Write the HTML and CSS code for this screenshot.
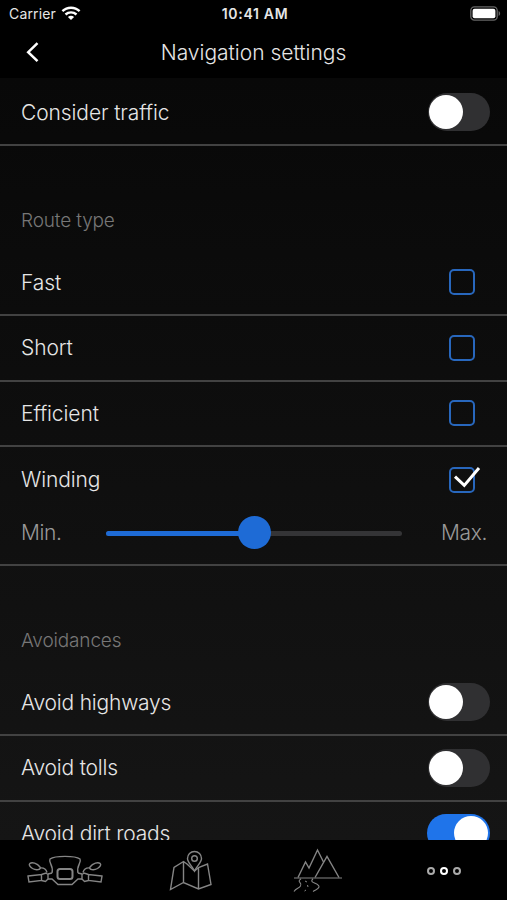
FILE: index.html
```html
<!DOCTYPE html>
<html lang="en">
<head>
  <meta charset="UTF-8" />
  <meta name="viewport" content="width=device-width, initial-scale=1.0"/>
  <title>Navigation settings</title>
  <link rel="stylesheet" href="styles.css">
</head>
<body>
  <div class="app">
    <div class="status-bar">
      <div class="carrier">
        <span>Carrier</span>
        <svg class="wifi" width="20" height="15" viewBox="0 0 20 15">
          <path d="M1.4 5.2 C6.2 .6 13.8 .6 18.6 5.2" />
          <path d="M4.5 8.5 C7.6 5.6 12.4 5.6 15.5 8.5" />
          <path class="dot" d="M10 14 L6.9 10.9 C8.6 9.3 11.4 9.3 13.1 10.9 Z" />
        </svg>
      </div>
      <span class="time">10:41 AM</span>
      <svg class="battery" width="31" height="15" viewBox="0 0 31 15">
        <rect class="shell" x=".8" y=".9" width="26.4" height="13.2" rx="3.6" />
        <rect class="charge" x="2.6" y="2.8" width="22.8" height="9.4" rx="2" />
        <path class="tip" d="M28.6 5 C30.6 5.9 30.6 9.1 28.6 10 Z" />
      </svg>
    </div>

    <div class="nav-bar">
      <svg class="back" width="14" height="22" viewBox="0 0 14 22">
        <path d="M12.5 1.2 L3.2 10.2 L12.5 19.2" />
      </svg>
      <h1>Navigation settings</h1>
    </div>

    <div class="content">
      <div class="row first">
        <span class="label">Consider traffic</span>
        <span class="toggle"></span>
      </div>

      <h2>Route type</h2>
      <div class="row">
        <span class="label">Fast</span>
        <span class="checkbox"></span>
      </div>
      <div class="row">
        <span class="label">Short</span>
        <span class="checkbox"></span>
      </div>
      <div class="row">
        <span class="label">Efficient</span>
        <span class="checkbox"></span>
      </div>
      <div class="row open">
        <span class="label">Winding</span>
        <span class="checkbox">
          <svg class="check" width="30" height="24" viewBox="0 0 30 24">
            <path d="M3 11.6 L12.3 20.4 L27 3" />
          </svg>
        </span>
      </div>
      <div class="slider-row">
        <span class="min">Min.</span>
        <div class="slider">
          <div class="fill"></div>
          <div class="thumb"></div>
        </div>
        <span class="max">Max.</span>
      </div>

      <h2>Avoidances</h2>
      <div class="row avoid">
        <span class="label">Avoid highways</span>
        <span class="toggle"></span>
      </div>
      <div class="row avoid">
        <span class="label">Avoid tolls</span>
        <span class="toggle"></span>
      </div>
      <div class="row avoid">
        <span class="label">Avoid dirt roads</span>
        <span class="toggle on"></span>
      </div>
    </div>

    <div class="tab-bar">
      <!-- handlebar -->
      <svg width="78" height="34" viewBox="0 0 78 34">
        <path d="M26 19 C28 11 22 9 24 5 C29 1.5 49 1.5 54 5 C56 9 50 11 52 19" />
        <path d="M22 20 L26 19 M52 19 L56 20 M22 25 L26 25 L32 30.5 H46 L52 25 L56 25" />
        <rect class="thick" x="31.5" y="15" width="15" height="10" rx="2.5" />
        <path d="M4 9.3 C6 8 11 9 14 13 C15.5 16 10 16.5 6.5 14.5 C3.5 12.5 2.5 10.5 4 9.3 Z" />
        <path d="M74 9.3 C72 8 67 9 64 13 C62.5 16 68 16.5 71.5 14.5 C74.5 12.5 75.5 10.5 74 9.3 Z" />
        <path d="M14 14 C18 13.5 20 15 21 18.5 M64 14 C60 13.5 58 15 57 18.5" />
        <path d="M2 22 L15.5 20.5 V26.5 L3 28 Z M15.5 20.5 L20 19 L22 20.5 V25 L19.5 27.5 L15.5 26.5" />
        <path d="M76 22 L62.5 20.5 V26.5 L75 28 Z M62.5 20.5 L58 19 L56 20.5 V25 L58.5 27.5 L62.5 26.5" />
      </svg>
      <!-- map -->
      <svg width="44" height="42" viewBox="0 0 44 42">
        <path d="M18 14 L14.5 11.5 L5 17.5 L1.5 39.5 L14.5 32.5 L29.5 39 L42 34.5 L38.5 14 L29.5 17.5 L25.5 21 L18 14 M14.5 11.5 V32.5 M29.5 18 V39" />
        <path d="M25.5 21 C23 15.5 18.5 12.5 18.5 8.5 C18.5 4.5 21.5 1.5 25.5 1.5 C29.5 1.5 32.5 4.5 32.5 8.5 C32.5 12.5 28 15.5 25.5 21 Z" />
        <circle cx="25.5" cy="8.5" r="2.8" />
      </svg>
      <!-- mountains -->
      <svg width="50" height="46" viewBox="0 0 50 46">
        <path d="M5 29.5 L12.5 14 L16 20 L24.5 2 L30.5 14" />
        <path d="M22 29.5 L34 8.5 L46 29.5" />
        <path class="thin" d="M1 30 H49 M8 31 C3 34 10 34.5 7.5 38 C6 40.5 3 40 1 43.5 M20 31 C15 35 27 35 26 39 C25.5 41 23 41.5 20 43.5" />
        <path class="dash" d="M12 33 L14 34 M14.5 37 L15 39 M13 42 L11.5 43" />
      </svg>
      <div class="more">
        <i></i><i class="current"></i><i></i>
      </div>
    </div>
  </div>
</body>
</html>
```
FILE: styles.css
```css
* {
  margin: 0;
  padding: 0;
  box-sizing: border-box;
}

body {
  background: #000;
  color: #e6e6e6;
  font-family: Inter, sans-serif;
  font-size: 21px;
  font-weight: 300;
  letter-spacing: -0.1px;
  overflow: hidden;
}

svg {
  display: block;
  fill: none;
}

.app {
  height: 900px;
  display: flex;
  flex-direction: column;
}

.status-bar {
  height: 27px;
  display: grid;
  grid-template-columns: 1fr auto 1fr;
  align-items: center;
  padding: 0 6px 0 9px;
  font-size: 14px;
  font-weight: 400;
  letter-spacing: 0.15px;
}

.carrier {
  display: flex;
  align-items: center;
  gap: 5px;
}

.wifi {
  stroke: #fff;
  stroke-width: 2.4;
}

.wifi .dot {
  fill: #fff;
  stroke: none;
}

.time {
  font-weight: 600;
  letter-spacing: 0.7px;
}

.battery {
  justify-self: end;
}

.shell {
  stroke: #666;
  stroke-width: 1.3;
}

.charge {
  fill: #fff;
}

.tip {
  fill: #666;
}

.nav-bar {
  height: 51px;
  display: grid;
  grid-template-columns: 60px 1fr 60px;
  align-items: center;
}

.back {
  margin-left: 25px;
  stroke: #fff;
  stroke-width: 2.5;
}

h1 {
  font-size: 21px;
  font-weight: 300;
  letter-spacing: 0;
  text-align: center;
}

.content {
  flex: 1;
  min-height: 0;
  overflow: hidden;
  background: linear-gradient(#080808, #151515);
}

.row {
  height: 65.5px;
  display: flex;
  align-items: center;
  justify-content: space-between;
  padding: 0 17px 0 21px;
  border-bottom: 2px solid #424242;
}

.first {
  height: 68px;
  padding-top: 2px;
}

.open {
  height: 65px;
  border-bottom: none;
}

.avoid {
  letter-spacing: -0.2px;
}

h2 {
  height: 104.5px;
  padding: 61.5px 21px 0;
  color: #777;
  font-size: 19px;
  font-weight: 300;
  letter-spacing: -0.15px;
  line-height: 26px;
}

.toggle {
  width: 62px;
  height: 38px;
  padding: 2px 2px 2px 1px;
  border-radius: 19px;
  background: #303032;
}

.toggle::before {
  content: '';
  display: block;
  width: 34px;
  height: 34px;
  border-radius: 50%;
  background: #fff;
}

.toggle.on {
  width: 63px;
  background: #1f74ea;
}

.toggle.on::before {
  margin-left: 26px;
}

.checkbox {
  position: relative;
  width: 26px;
  height: 26px;
  margin-right: 15px;
  border: 2px solid #2867bd;
  border-radius: 5px;
}

.check {
  position: absolute;
  left: 1px;
  top: -4px;
  stroke: #fff;
  stroke-width: 3;
}

.slider-row {
  height: 54px;
  display: flex;
  align-items: flex-start;
  padding: 7.5px 20px 0 21px;
  border-bottom: 2px solid #424242;
  color: #999;
  letter-spacing: -0.4px;
  line-height: 26px;
}

.min {
  width: 85px;
}

.slider {
  width: 296px;
  height: 5px;
  margin-top: 11px;
  position: relative;
  border-radius: 3px;
  background: #343436;
}

.fill {
  width: 50%;
  height: 5px;
  border-radius: 3px;
  background: #1e6bd6;
}

.thumb {
  position: absolute;
  left: 132px;
  top: -15px;
  width: 33px;
  height: 33px;
  border-radius: 50%;
  background: #1e6bd6;
}

.max {
  margin-left: auto;
}

.tab-bar {
  height: 60px;
  display: grid;
  grid-template-columns: repeat(4, 1fr);
  align-items: center;
  justify-items: center;
  padding: 2px 0 0 2px;
  background: #000;
}

.tab-bar svg {
  stroke: #858585;
  stroke-width: 1.4;
}

.tab-bar .thick {
  stroke-width: 2;
}

.tab-bar .thin {
  stroke-width: 1.1;
}

.tab-bar .dash {
  stroke-width: 1;
}

.more {
  display: flex;
  gap: 5px;
}

.more i {
  width: 8px;
  height: 8px;
  border: 2px solid #aaa;
  border-radius: 50%;
}

.more .current {
  border-color: #fff;
}
```
